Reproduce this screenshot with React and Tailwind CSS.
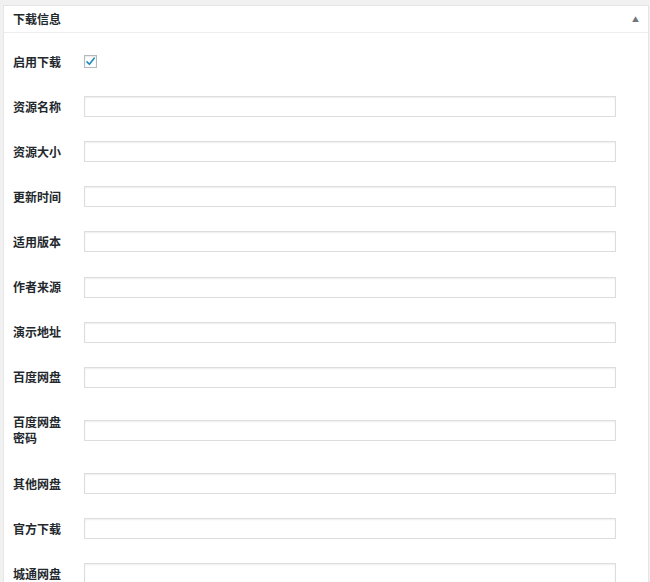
import React from 'react';

const fields = [
  ['资源名称'],
  ['资源大小'],
  ['更新时间'],
  ['适用版本'],
  ['作者来源'],
  ['演示地址'],
  ['百度网盘'],
  ['百度网盘', '密码'],
  ['其他网盘'],
  ['官方下载'],
  ['城通网盘'],
];

const font = { fontFamily: '"Noto Sans CJK SC", "Liberation Sans", sans-serif' };

const App = () => {
  return (
    <div className="w-[650px] h-[582px] overflow-hidden bg-[#f1f1f1] pt-[5px] pl-[3px] pr-px" style={font}>
      <div className="bg-white border border-[#e5e5e5] h-[600px]">
        {/* Header */}
        <div className="flex items-center justify-between h-[27px] pl-[9px] pr-[9px] border-b border-[#eeeeee]">
          <h2 className="text-[12px] font-bold text-[#23282d] leading-none">下载信息</h2>
          <span className="text-[7px] text-[#72777c] leading-none">▲</span>
        </div>

        {/* Body */}
        <div className="pt-[6px] pl-[9px]">
          <div className="flex items-center h-[45px]">
            <label className="w-[71px] text-[12px] font-bold text-[#23282d]">启用下载</label>
            <span className="w-[13px] h-[13px] border border-[#b4b9be] bg-white flex items-center justify-center shadow-[inset_0_1px_2px_rgba(0,0,0,0.1)]">
              <svg viewBox="0 0 12 12" className="w-[11px] h-[11px]">
                <path d="M2.2 6.4 L4.8 9 L10 2.4" fill="none" stroke="#1e8cbe" strokeWidth="1.8" strokeLinecap="round" strokeLinejoin="round" />
              </svg>
            </span>
          </div>

          {fields.map((lines, i) => (
            <div key={i} className={`flex items-center ${lines.length > 1 ? 'h-[61px]' : 'h-[45.15px]'}`}>
              <label className="w-[71px] text-[12px] font-bold text-[#23282d] leading-[16px]">
                {lines.map((l, j) => (
                  <div key={j}>{l}</div>
                ))}
              </label>
              <input
                type="text"
                className="w-[532px] h-[21px] border border-[#dddddd] bg-white shadow-[inset_0_1px_2px_rgba(0,0,0,0.07)] outline-none"
              />
            </div>
          ))}
        </div>
      </div>
    </div>
  );
};

export default App;
